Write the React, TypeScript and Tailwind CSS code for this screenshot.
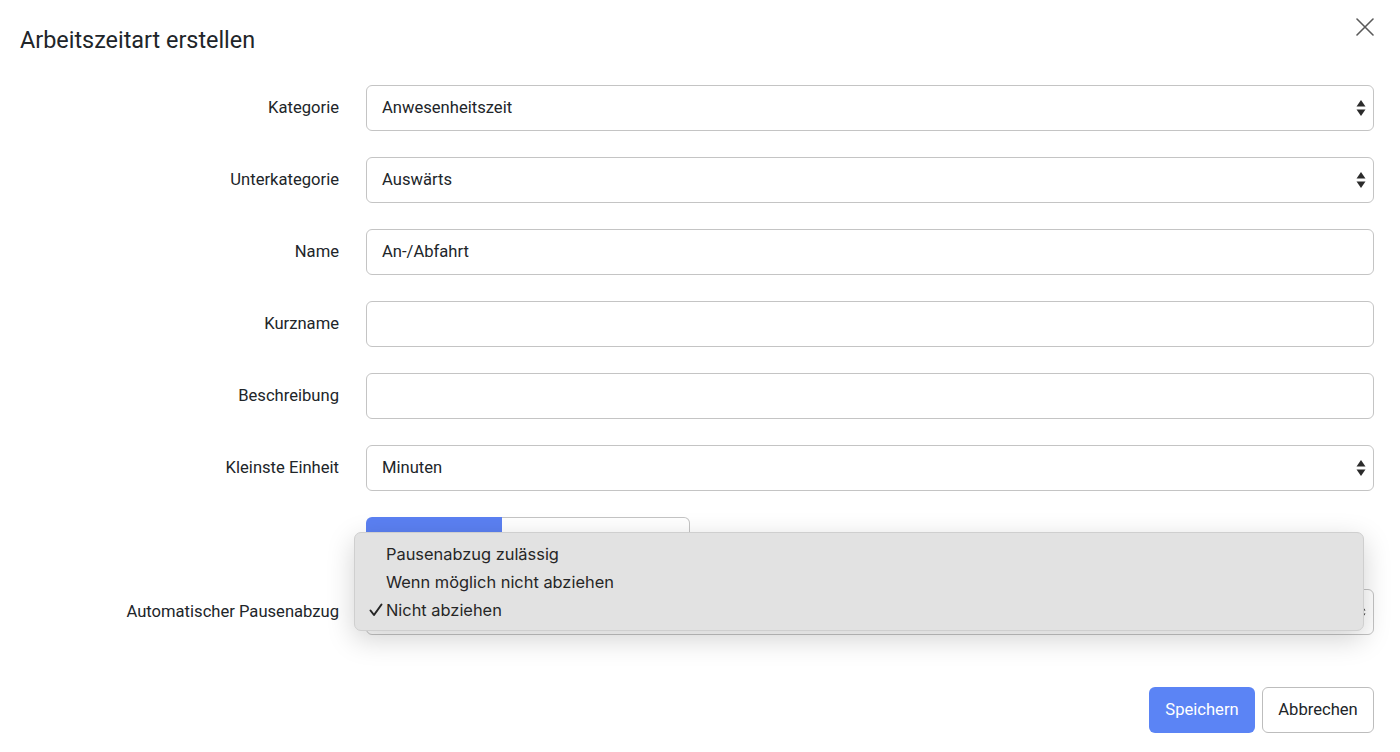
import { useState } from 'react';

interface Row {
    label: string;
    value: string;
    select?: boolean;
}

const rows: Row[] = [
    { label: 'Kategorie', value: 'Anwesenheitszeit', select: true },
    { label: 'Unterkategorie', value: 'Auswärts', select: true },
    { label: 'Name', value: 'An-/Abfahrt' },
    { label: 'Kurzname', value: '' },
    { label: 'Beschreibung', value: '' },
    { label: 'Kleinste Einheit', value: 'Minuten', select: true },
];

const options = ['Pausenabzug zulässig', 'Wenn möglich nicht abziehen', 'Nicht abziehen'];

function SelectArrows() {
    return (
        <svg width="10" height="18" viewBox="0 0 10 18" className="shrink-0">
            <path d="M5 1 L9.5 7.5 L0.5 7.5 Z" fill="#2b2b2b" />
            <path d="M5 17 L9.5 10.5 L0.5 10.5 Z" fill="#2b2b2b" />
        </svg>
    );
}

function Field({ value, select }: { value: string; select?: boolean }) {
    return (
        <div className="flex-1 h-[46px] flex items-center justify-between pl-[15px] pr-[7px] border border-[#c4c4c4] rounded-[6px] bg-white">
            <span className="text-[16.6px] text-[#212529]">{value}</span>
            {select && <SelectArrows />}
        </div>
    );
}

export default function App() {
    const [selected] = useState(2);

    return (
        <div
            className="relative w-[1400px] h-[752px] bg-white overflow-hidden text-[#212529]"
            style={{ fontFamily: 'Roboto, "Liberation Sans", Arial, sans-serif' }}
        >
            {/* Header */}
            <div className="flex items-start justify-between pl-5 pr-[26px] pt-[25px]">
                <h1 className="text-[23.4px] leading-[30px] font-normal text-[#212529]">Arbeitszeitart erstellen</h1>
                <button className="-mt-[7px] text-[#555]">
                    <svg width="18" height="18" viewBox="0 0 18 18">
                        <path d="M1 1 L17 17 M17 1 L1 17" stroke="#5a5a5a" strokeWidth="1.6" strokeLinecap="round" />
                    </svg>
                </button>
            </div>

            {/* Form */}
            <div className="flex flex-col gap-[26px] pr-[26px] mt-[30px]">
                {rows.map((row) => (
                    <div key={row.label} className="flex items-center">
                        <label className="w-[339px] text-right text-[16.6px] text-[#212529]">{row.label}</label>
                        <div className="ml-[27px] flex flex-1">
                            <Field value={row.value} select={row.select} />
                        </div>
                    </div>
                ))}

                {/* Segmented control */}
                <div className="flex items-center">
                    <div className="w-[339px]" />
                    <div className="ml-[27px] flex h-[46px]">
                        <div className="w-[136px] flex items-center justify-center bg-[#5b80f2] text-white text-[16.6px] rounded-l-[6px]">
                            Wöchentlich
                        </div>
                        <div className="w-[188px] flex items-center justify-center bg-white border border-[#c4c4c4] border-l-0 rounded-r-[6px] text-[16.6px]">
                            Monatlich abrechnen
                        </div>
                    </div>
                </div>

                <div className="flex items-center">
                    <label className="w-[339px] text-right text-[16.6px] text-[#212529]">Automatischer Pausenabzug</label>
                    <div className="ml-[27px] flex flex-1">
                        <Field value={options[selected]} select />
                    </div>
                </div>
            </div>

            {/* Footer */}
            <div className="flex justify-end gap-[7px] pr-[26px] mt-[52px]">
                <button className="h-[46px] w-[106px] rounded-[6px] bg-[#5b84f5] text-white text-[16.6px]">Speichern</button>
                <button className="h-[46px] w-[112px] rounded-[6px] bg-white border border-[#bdbdbd] text-[16.6px] text-[#212529]">
                    Abbrechen
                </button>
            </div>

            {/* Native select popup */}
            <div
                className="absolute left-[354px] top-[532px] w-[1010px] h-[99px] rounded-[7px] bg-[#e2e2e2] border border-[#cfcfcf] shadow-[0_8px_28px_rgba(0,0,0,0.18)] pt-[7px]"
                style={{ fontFamily: 'Inter, "Noto Sans", sans-serif' }}
            >
                {options.map((opt, i) => (
                    <div key={opt} className="h-[28px] flex items-center text-[16.4px] text-[#262626]">
                        <span className="w-[31px] flex justify-end pr-[3px]">
                            {i === selected && (
                                <svg width="14" height="14" viewBox="0 0 14 14">
                                    <path
                                        d="M1.5 7.5 L5 12 L12.5 1.5"
                                        fill="none"
                                        stroke="#262626"
                                        strokeWidth="2"
                                        strokeLinecap="round"
                                        strokeLinejoin="round"
                                    />
                                </svg>
                            )}
                        </span>
                        <span>{opt}</span>
                    </div>
                ))}
            </div>
        </div>
    );
}
